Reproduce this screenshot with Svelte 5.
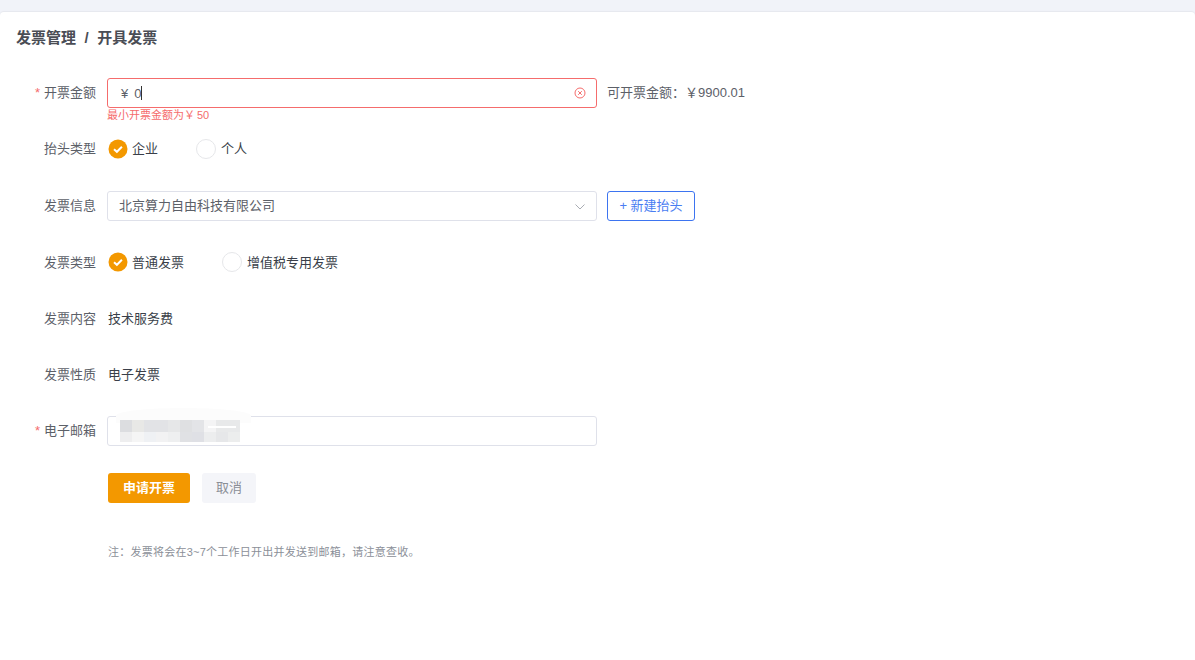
<script>
  const rowsBlur = [
    { top: 0, left: 0, w: 12, h: 12, c: '#dcdde0' },
    { top: 0, left: 12, w: 12, h: 12, c: '#e8e8e6' },
    { top: 0, left: 24, w: 24, h: 12, c: '#e2e3e6' },
    { top: 0, left: 48, w: 12, h: 12, c: '#e6e7e8' },
    { top: 0, left: 60, w: 12, h: 12, c: '#dfe0e2' },
    { top: 0, left: 72, w: 12, h: 12, c: '#e3e4e7' },
    { top: 0, left: 84, w: 12, h: 12, c: '#f4f4f5' },
    { top: 0, left: 96, w: 24, h: 12, c: '#e8e9ea' },
    { top: 12, left: 0, w: 12, h: 10, c: '#eeeeef' },
    { top: 12, left: 12, w: 12, h: 10, c: '#f5f5f5' },
    { top: 12, left: 24, w: 12, h: 10, c: '#eff1f4' },
    { top: 12, left: 36, w: 12, h: 10, c: '#f2f2f3' },
    { top: 12, left: 48, w: 12, h: 10, c: '#eeeff0' },
    { top: 12, left: 60, w: 12, h: 10, c: '#e0e1e4' },
    { top: 12, left: 72, w: 12, h: 10, c: '#dfe0e5' },
    { top: 12, left: 84, w: 12, h: 10, c: '#ecedee' },
    { top: 12, left: 96, w: 12, h: 10, c: '#e6e7e9' },
    { top: 12, left: 108, w: 12, h: 10, c: '#eceded' },
    { top: 6, left: 88, w: 28, h: 2, c: '#ffffff' },
  ];
</script>

<div class="page">
  <div class="card">
    <div class="crumb">
      <span>发票管理</span><span class="sep">/</span><span>开具发票</span>
    </div>

    <div class="form">
      <div class="row">
        <div class="label high"><span class="star">*</span>开票金额</div>
        <div class="input error">
          <span class="yen">¥</span><span class="amount">0</span><span class="caret"></span>
          <svg class="clear" width="12" height="12" viewBox="0 0 12 12">
            <circle cx="6" cy="6" r="5" />
            <path d="M4.2 4.2l3.6 3.6M7.8 4.2l-3.6 3.6" />
          </svg>
          <div class="err-msg">最小开票金额为￥<span class="err-num">50</span></div>
        </div>
        <div class="avail high">可开票金额：￥9900.01</div>
      </div>

      <div class="row">
        <div class="label high">抬头类型</div>
        <div class="radio on">
          <svg width="20" height="20" viewBox="0 0 20 20">
            <circle cx="10" cy="10" r="9.5" fill="#f39800" />
            <path d="M6 10.2l2.9 2.6 5-5" fill="none" stroke="#fff" stroke-width="2" />
          </svg>
          <span class="high">企业</span>
        </div>
        <div class="radio off first-off"><i></i><span class="high">个人</span></div>
      </div>

      <div class="row">
        <div class="label up">发票信息</div>
        <div class="input select">
          <span class="up">北京算力自由科技有限公司</span>
          <svg class="chev" width="10" height="6" viewBox="0 0 10 6">
            <path d="M0.5 0.5l4.5 4.5 4.5-4.5" />
          </svg>
        </div>
        <button class="new-btn"><span class="up">+ 新建抬头</span></button>
      </div>

      <div class="row">
        <div class="label">发票类型</div>
        <div class="radio on">
          <svg width="20" height="20" viewBox="0 0 20 20">
            <circle cx="10" cy="10" r="9.5" fill="#f39800" />
            <path d="M6 10.2l2.9 2.6 5-5" fill="none" stroke="#fff" stroke-width="2" />
          </svg>
          <span>普通发票</span>
        </div>
        <div class="radio off second-off"><i></i><span>增值税专用发票</span></div>
      </div>

      <div class="row">
        <div class="label up">发票内容</div>
        <div class="value up">技术服务费</div>
      </div>

      <div class="row">
        <div class="label up">发票性质</div>
        <div class="value up">电子发票</div>
      </div>

      <div class="row">
        <div class="label up"><span class="star">*</span>电子邮箱</div>
        <div class="input email">
          <div class="smudge"></div>
          <div class="blur">
            {#each rowsBlur as b}
              <span style="top:{b.top}px;left:{b.left}px;width:{b.w}px;height:{b.h}px;background:{b.c}"></span>
            {/each}
          </div>
        </div>
      </div>

      <div class="actions">
        <button class="submit"><span class="up">申请开票</span></button>
        <button class="cancel"><span class="up">取消</span></button>
      </div>

      <div class="note">注：发票将会在3~7个工作日开出并发送到邮箱，请注意查收。</div>
    </div>
  </div>
</div>

<style>
  :global(body) {
    margin: 0;
    background: #f1f3f9;
  }

  .page {
    height: 660px;
    padding-top: 12px;
    box-sizing: border-box;
    overflow: hidden;
    font-family: "Liberation Sans", "Noto Sans CJK SC", sans-serif;
    font-size: 13px;
    color: #4b4f58;
  }

  .card {
    height: 100%;
    background: #fff;
    border-radius: 4px 4px 0 0;
    box-shadow: 0 -1px 1px #e6e8ee;
  }

  .crumb {
    padding: 17px 0 0 16px;
    height: 18px;
    line-height: 18px;
    font-size: 15px;
    font-weight: 700;
    color: #4a4d55;
  }

  .sep {
    margin: 0 8.5px;
  }

  .form {
    padding-top: 31px;
  }

  .row {
    display: flex;
    align-items: center;
    height: 30px;
    margin-bottom: 26.33px;
  }

  .up {
    display: block;
    transform: translateY(-1px);
  }

  .high {
    display: block;
    transform: translateY(-2px);
  }

  .label {
    width: 96px;
    margin-right: 11px;
    text-align: right;
    color: #5c6068;
    flex: none;
  }

  .star {
    color: #f56c6c;
    margin-right: 4px;
  }

  .input {
    position: relative;
    width: 490px;
    height: 30px;
    box-sizing: border-box;
    border: 1px solid #dfe1ea;
    border-radius: 3px;
    display: flex;
    align-items: center;
    flex: none;
  }

  .error {
    border-color: #f56c6c;
    padding-left: 13px;
  }

  .yen {
    margin-right: 6px;
    color: #5c6068;
  }

  .amount {
    color: #5c6068;
    font-size: 13px;
  }

  .caret {
    width: 1px;
    height: 14px;
    background: #333;
  }

  .clear {
    position: absolute;
    right: 10px;
    top: 8px;
    fill: none;
    stroke: #f56c6c;
    stroke-width: 1;
  }

  .err-msg {
    position: absolute;
    left: -1px;
    top: 29px;
    font-size: 11px;
    line-height: 14px;
    color: #f56c6c;
    white-space: nowrap;
  }

  .err-num {
    margin-left: 2px;
  }

  .avail {
    margin-left: 10px;
    color: #5c6068;
  }

  .select {
    padding-left: 11px;
    color: #5c6068;
  }

  .chev {
    display: block;
    position: absolute;
    right: 11px;
    top: 12px;
    fill: none;
    stroke: #a9acb3;
    stroke-width: 1;
  }

  .new-btn {
    margin-left: 10px;
    width: 88px;
    height: 30px;
    padding: 0;
    background: #fff;
    border: 1px solid #3d74f0;
    border-radius: 3px;
    color: #4a7df2;
    font: inherit;
  }

  .radio {
    display: flex;
    align-items: center;
    gap: 4px;
    color: #3a3f49;
  }

  .radio svg {
    display: block;
    margin-left: 1px;
  }

  .radio i {
    display: block;
    width: 18px;
    height: 18px;
    border: 1px solid #e6e7ea;
    border-radius: 50%;
  }

  .radio.off {
    gap: 5px;
  }

  .first-off {
    margin-left: 38px;
  }

  .second-off {
    margin-left: 38px;
  }

  .value {
    margin-left: 1px;
    color: #3a3f49;
  }

  .smudge {
    position: absolute;
    left: 8px;
    top: -9px;
    width: 135px;
    height: 15px;
    background: #fcfcfc;
    border-radius: 50% 50% 0 0;
  }

  .blur {
    position: absolute;
    left: 12px;
    top: 3px;
    width: 120px;
    height: 22px;
  }

  .blur span {
    position: absolute;
  }

  .actions {
    display: flex;
    gap: 12px;
    padding-left: 108px;
    margin-top: 27px;
  }

  .actions button {
    height: 30px;
    padding: 0;
    border: none;
    border-radius: 3px;
    font: inherit;
  }

  .actions .submit {
    width: 82px;
    background: #f39800;
    color: #fff;
    font-weight: 700;
  }

  .actions .cancel {
    width: 54px;
    background: #f4f5f9;
    color: #8b8e96;
  }

  .note {
    margin: 41px 0 0 108px;
    font-size: 11px;
    line-height: 16px;
    letter-spacing: 0.24px;
    color: #8b8f98;
  }
</style>
